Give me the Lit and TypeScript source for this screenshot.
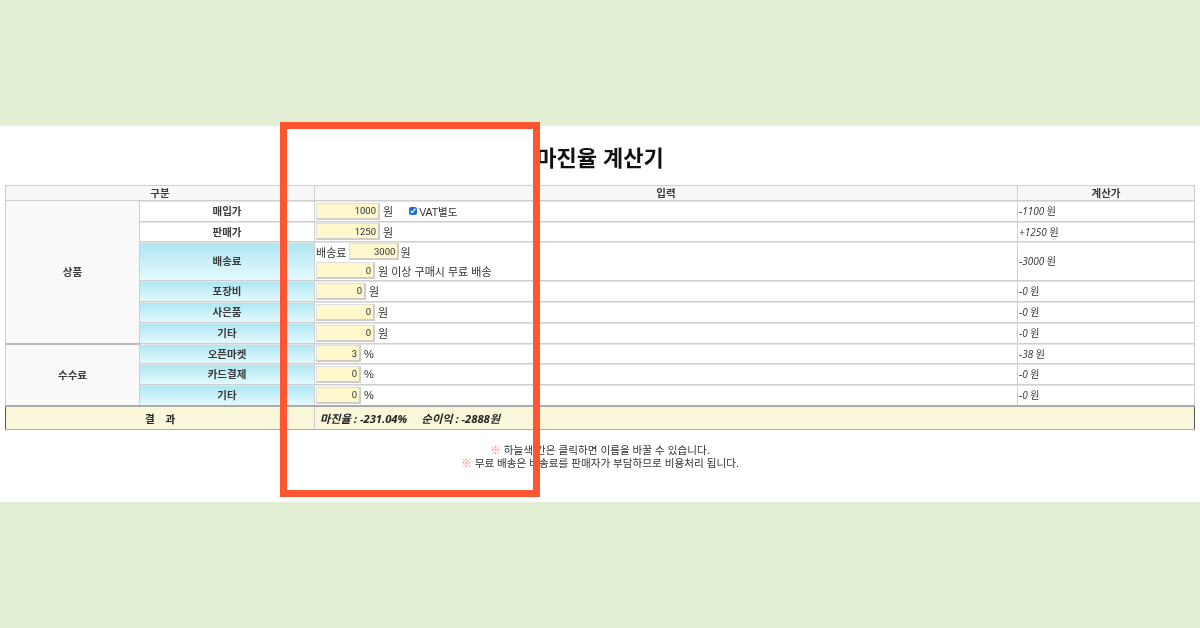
import { LitElement, html, css } from "lit";
import { customElement } from "lit/decorators.js";

const won = (v: string, w: string, unit = "원") =>
  html`<div class="line"><input class="num ${w}" .value=${v} /><span class="u">${unit}</span></div>`;

@customElement("app-root")
export class AppRoot extends LitElement {
  static styles = css`
    :host {
      display: block;
      height: 628px;
      background: #e3efd5;
      padding-top: 126px;
      box-sizing: border-box;
      position: relative;
      font-family: "Liberation Sans", "Noto Sans CJK KR", sans-serif;
      color: #222;
      overflow: hidden;
    }
    .band {
      background: #fff;
      height: 376px;
      padding: 0 5px;
      box-sizing: border-box;
      display: flex;
      flex-direction: column;
    }
    .soft { filter: blur(0.35px); }
    h1 {
      margin: 19px 0 0;
      height: 40px;
      font-size: 22px;
      line-height: 28px;
      font-weight: 700;
      text-align: center;
      color: #111;
      font-family: "Liberation Sans", "Noto Sans CJK KR", sans-serif;
    }
    table {
      border-collapse: collapse;
      table-layout: fixed;
      width: 1189px;
      border: 1px solid #b5b5b5;
    }
    col.a { width: 134px; }
    col.b { width: 175px; }
    col.c { width: 703px; }
    col.d { width: 177px; }
    th, td {
      border: 1px solid #cfcfcf;
      padding: 0;
      font-family: "Liberation Sans", "Noto Sans CJK KR", sans-serif;
      font-size: 10.5px;
      font-weight: 400;
      overflow: hidden;
    }
    .h th { height: 14px; background: #f7f7f7; font-weight: 700; color: #3a3a3a; line-height: 12px; padding: 0; }
    .cat { background: #f9f9f9; text-align: center; font-weight: 700; color: #3a3a3a; }
    .cat.first { border-bottom: 2px solid #bbb; }
    .name { text-align: center; font-weight: 700; color: #3a3a3a; background: #fff; box-shadow: inset 0 1px 0 #e4e4e4; }
    .sky { background: linear-gradient(#ade6f2, #e6fafe); }
    .in { padding-left: 1px; text-align: left; box-shadow: inset 0 1px 0 #e4e4e4; }
    .vl { border-left: 1px solid #888; }
    .calc {
      font-family: "Open Sans", "Noto Sans CJK KR", sans-serif;
      font-style: italic;
      font-size: 10px;
      padding-left: 1px;
      border-left: 1px solid #888;
      color: #333;
      box-shadow: inset 0 1px 0 #e4e4e4;
    }
    .calc span { font-style: normal; }
    tr.r21 > * { height: 19px; padding-bottom: 1px; }
    tr.r20 > * { height: 18px; padding-bottom: 1px; }
    tr.r39 > * { height: 37px; padding-bottom: 1px; }
    tr.r21 > .in, tr.r20 > .in, tr.r39 > .in { height: auto; padding-bottom: 0; }
    .line { display: flex; align-items: center; height: 19px; color: #333; font-size: 11px; }
    .num {
      height: 17px;
      box-sizing: border-box;
      border: 1px solid #dedede;
      border-right: 2px solid #cdcdcd;
      border-bottom: 2px solid #cdcdcd;
      background: #fff8cd;
      text-align: right;
      font: 9.5px Roboto, sans-serif;
      color: #333;
      padding: 0 2px 0 0;
      margin: 0;
      outline: none;
    }
    .w63 { width: 64px; }
    .w59 { width: 59px; }
    .w50 { width: 50px; }
    .w45 { width: 45px; }
    .u { margin-left: 0; white-space: pre; }
    .vat { display: inline-flex; align-items: center; margin-left: 16px; white-space: pre; font-size: 10.5px; }
    .vat input { width: 8px; height: 8px; margin: 0 2px 0 0; accent-color: #1f6fd6; }
    .fee { margin-left: 3px; }
    .tail { margin-left: 1px; }
    .res > * { background: #faf6da; border-top: 2px solid #aaa; border-bottom: 1px solid #aaa; height: 22px; }
    .res th { font-weight: 700; word-spacing: 8px; color: #222; border-left: 1px solid #555; }
    .res td {
      border-left: 1px solid #555;
      border-right: 1px solid #555;
      padding-left: 5px;
      font-family: "Open Sans", "Noto Sans CJK KR", sans-serif;
      font-style: italic;
      font-weight: 700;
      font-size: 11.2px;
      color: #222;
      white-space: pre;
    }
    .notes {
      margin-top: 14px;
      text-align: center;
      font-size: 10.6px;
      line-height: 13px;
      color: #333;
      font-family: "Liberation Sans", "Noto Sans CJK KR", sans-serif;
    }
    .notes b { color: #e87878; font-weight: 400; }
    .frame {
      position: absolute;
      left: 280px;
      top: 122px;
      width: 260px;
      height: 375px;
      box-sizing: border-box;
      border: 7px solid #ff5530;
    }
  `;

  render() {
    return html`
      <div class="band">
        <h1 class="soft">마진율 계산기</h1>
        <table class="soft">
          <colgroup><col class="a" /><col class="b" /><col class="c" /><col class="d" /></colgroup>
          <tr class="h"><th colspan="2">구분</th><th class="vl">입력</th><th class="vl">계산가</th></tr>
          <tr class="r21">
            <td class="cat first" rowspan="6">상품</td>
            <td class="name">매입가</td>
            <td class="in vl"><div class="line"><input class="num w63" .value=${"1000"} /><span class="u"> 원</span><label class="vat"><input type="checkbox" checked />VAT별도</label></div></td>
            <td class="calc">-1100 <span>원</span></td>
          </tr>
          <tr class="r20">
            <td class="name">판매가</td>
            <td class="in vl">${won("1250", "w63", " 원")}</td>
            <td class="calc">+1250 <span>원</span></td>
          </tr>
          <tr class="r39">
            <td class="name sky">배송료</td>
            <td class="in vl">
              <div class="line"><span>배송료</span><input class="num w50 fee" .value=${"3000"} /><span class="u tail">원</span></div>
              ${won("0", "w59", " 원 이상 구매시 무료 배송")}
            </td>
            <td class="calc">-3000 <span>원</span></td>
          </tr>
          <tr class="r21">
            <td class="name sky">포장비</td>
            <td class="in vl">${won("0", "w50", " 원")}</td>
            <td class="calc">-0 <span>원</span></td>
          </tr>
          <tr class="r21">
            <td class="name sky">사은품</td>
            <td class="in vl">${won("0", "w59", " 원")}</td>
            <td class="calc">-0 <span>원</span></td>
          </tr>
          <tr class="r21">
            <td class="name sky">기타</td>
            <td class="in vl">${won("0", "w59", " 원")}</td>
            <td class="calc">-0 <span>원</span></td>
          </tr>
          <tr class="r20">
            <td class="cat" rowspan="3">수수료</td>
            <td class="name sky">오픈마켓</td>
            <td class="in vl">${won("3", "w45", " %")}</td>
            <td class="calc">-38 <span>원</span></td>
          </tr>
          <tr class="r21">
            <td class="name sky">카드결제</td>
            <td class="in vl">${won("0", "w45", " %")}</td>
            <td class="calc">-0 <span>원</span></td>
          </tr>
          <tr class="r21">
            <td class="name sky">기타</td>
            <td class="in vl">${won("0", "w45", " %")}</td>
            <td class="calc">-0 <span>원</span></td>
          </tr>
          <tr class="res">
            <th colspan="2">결 과</th>
            <td colspan="2">마진율 : -231.04%     순이익 : -2888원</td>
          </tr>
        </table>
        <div class="notes soft">
          <div><b>※</b> 하늘색 칸은 클릭하면 이름을 바꿀 수 있습니다.</div>
          <div><b>※</b> 무료 배송은 배송료를 판매자가 부담하므로 비용처리 됩니다.</div>
        </div>
      </div>
      <div class="frame"></div>
    `;
  }
}
